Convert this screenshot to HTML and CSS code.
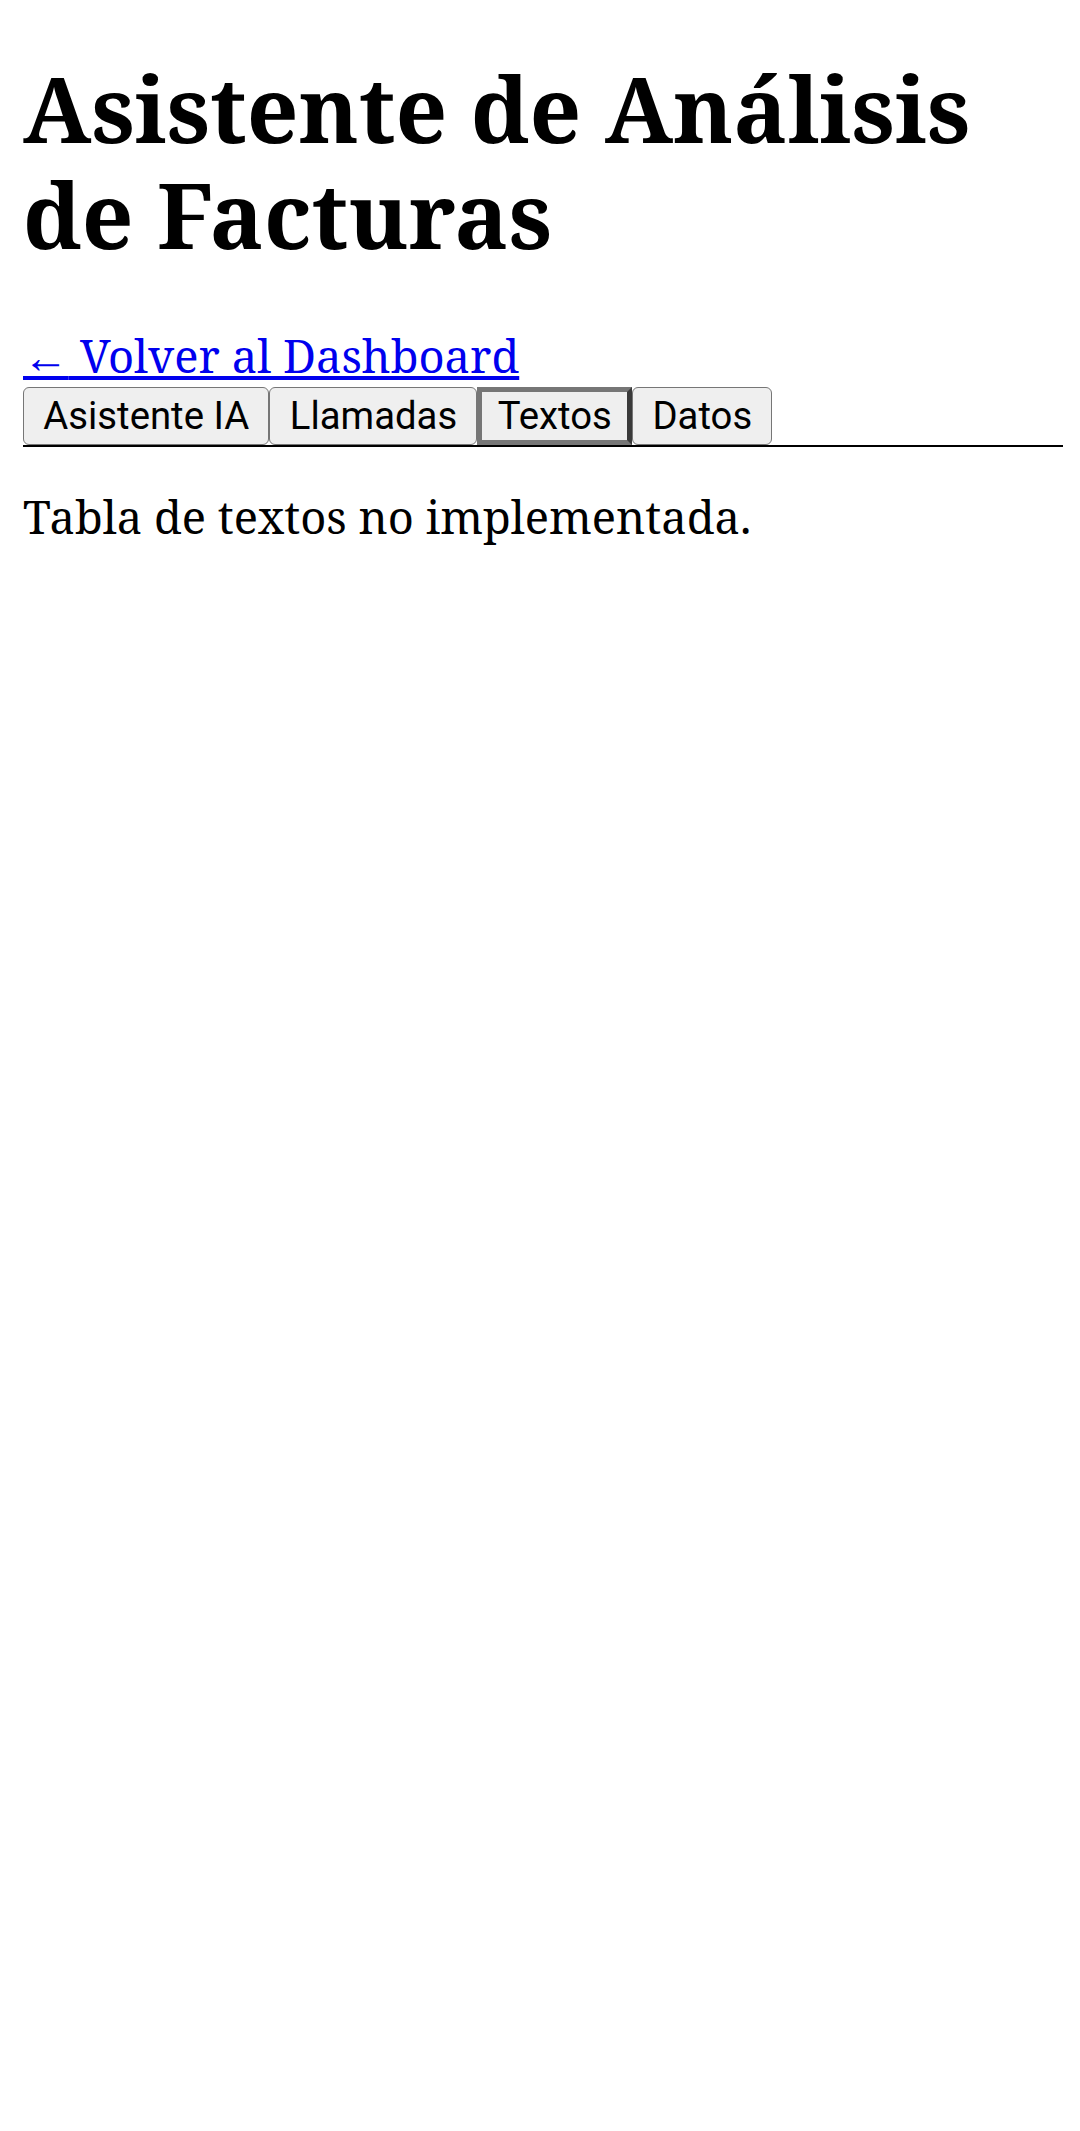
FILE: index.html
```html
<!DOCTYPE html>
<html lang="es">
<head>
<meta charset="utf-8">
<title>Asistente de Análisis de Facturas</title>
<link rel="stylesheet" href="styles.css">
</head>
<body>
<h1 class="title">Asistente de Análisis de Facturas</h1>
<div class="back"><a href="#" class="back-link"><span class="arrow">←</span> Volver al Dashboard</a></div>
<div class="tabs"><button class="tab">Asistente IA</button><button class="tab">Llamadas</button><button class="tab tab-active">Textos</button><button class="tab">Datos</button></div>
<p class="msg">Tabla de textos no implementada.</p>
</body>
</html>
```
FILE: styles.css
```css
html {
  line-height: 1.15;
}
body {
  margin: 0 17px 0 23px;
  font-family: "Noto Serif", "DejaVu Serif", serif;
  background: #fff;
  color: #000;
}
.title {
  font-size: 90.5px;
  font-weight: bold;
  margin: 55px 0 60px;
  line-height: 106px;
}
.back {
  font-size: 45.3px;
  line-height: 58px;
}
.back-link {
  color: #0000ee;
  text-decoration: underline;
}
.arrow {
  font-family: "Liberation Serif", serif;
}
.tabs {
  display: flex;
  border-bottom: 2px solid #000;
}
.tab {
  font-family: Roboto, "Liberation Sans", sans-serif;
  font-size: 38.3px;
  line-height: 1.15;
  height: 58px;
  padding: 0 19.3px;
  margin: 0;
  border: 1px solid #767676;
  border-radius: 6px;
  background: #efefef;
  color: #000;
}
.tab-active {
  border: 5px solid #767676;
  border-right-color: #3a3a3a;
  border-radius: 0;
  padding: 0 15.3px;
}
.msg {
  font-size: 45.3px;
  line-height: 53px;
  margin: 43px 0;
}
```
